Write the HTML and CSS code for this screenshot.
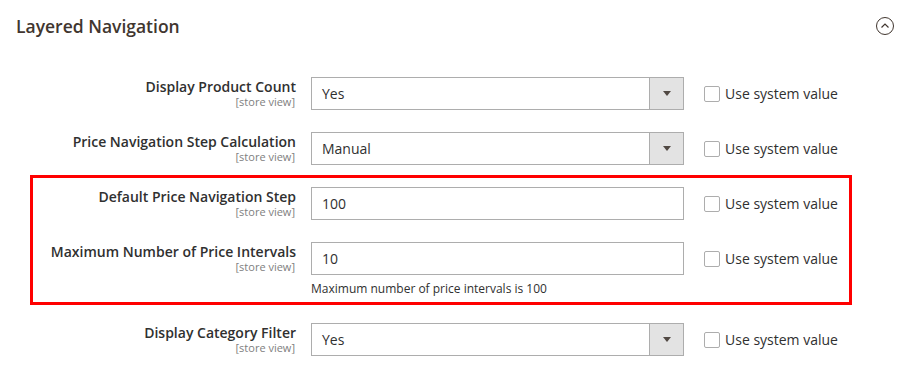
FILE: index.html
```html
<!DOCTYPE html>
<html>
<head>
<meta charset="utf-8">
<link rel="stylesheet" href="styles.css">
</head>
<body>
<div class="section">
  <div class="section-head">
    <h2 class="section-title">Layered Navigation</h2>
    <span class="toggle">
      <svg width="20" height="20" viewBox="0 0 20 20"><circle cx="10" cy="10" r="8.5" fill="none" stroke="#41362f" stroke-width="1"/><path d="M6.5 11.5 L10 8 L13.5 11.5" fill="none" stroke="#41362f" stroke-width="1.2"/></svg>
    </span>
  </div>
  <div class="fields">
    <div class="row">
      <div class="label"><span class="label-text">Display Product Count</span><span class="scope">[store view]</span></div>
      <div class="control"><div class="select"><span class="select-value">Yes</span><span class="select-arrow"><span class="tri"></span></span></div></div>
      <label class="use-default"><span class="checkbox"></span>Use system value</label>
    </div>
    <div class="row">
      <div class="label"><span class="label-text">Price Navigation Step Calculation</span><span class="scope">[store view]</span></div>
      <div class="control"><div class="select"><span class="select-value">Manual</span><span class="select-arrow"><span class="tri"></span></span></div></div>
      <label class="use-default"><span class="checkbox"></span>Use system value</label>
    </div>
    <div class="group">
      <div class="row">
        <div class="label"><span class="label-text">Default Price Navigation Step</span><span class="scope">[store view]</span></div>
        <div class="control"><div class="input">100</div></div>
        <label class="use-default"><span class="checkbox"></span>Use system value</label>
      </div>
      <div class="row row-note">
        <div class="label"><span class="label-text">Maximum Number of Price Intervals</span><span class="scope">[store view]</span></div>
        <div class="control"><div class="input">10</div><div class="note">Maximum number of price intervals is 100</div></div>
        <label class="use-default"><span class="checkbox"></span>Use system value</label>
      </div>
    </div>
    <div class="row">
      <div class="label"><span class="label-text">Display Category Filter</span><span class="scope">[store view]</span></div>
      <div class="control"><div class="select"><span class="select-value">Yes</span><span class="select-arrow"><span class="tri"></span></span></div></div>
      <label class="use-default"><span class="checkbox"></span>Use system value</label>
    </div>
  </div>
</div>
</body>
</html>
```
FILE: styles.css
```css
html, body {
  margin: 0;
  padding: 0;
  background: #ffffff;
}
body {
  font-family: "Open Sans", "Liberation Sans", sans-serif;
  color: #303030;
  font-size: 14px;
  width: 916px;
  height: 376px;
  overflow: hidden;
}
.section-head {
  display: flex;
  align-items: center;
  justify-content: space-between;
  padding: 10px 21px 0 16px;
  height: 32px;
}
.section-title {
  margin: 0;
  font-size: 17.5px;
  font-weight: 600;
  color: #41362f;
  line-height: 26px;
}
.toggle {
  display: flex;
  width: 20px;
  height: 20px;
  margin-top: 0;
}
.fields {
  padding-top: 35px;
  display: flex;
  flex-direction: column;
}
.row {
  display: grid;
  grid-template-columns: 296px 373px auto;
  column-gap: 15px;
  margin-bottom: 22px;
}
.group {
  position: relative;
}
.group::after {
  content: "";
  position: absolute;
  left: 30px;
  top: -12px;
  width: 816px;
  height: 124px;
  border: 3px solid #ff0000;
  pointer-events: none;
}
.row-note {
  margin-bottom: 26px;
}
.label {
  display: flex;
  flex-direction: column;
  align-items: flex-end;
  text-align: right;
  padding-top: 1px;
}
.label-text {
  font-weight: 600;
  font-size: 14px;
  line-height: 17px;
  color: #303030;
}
.scope {
  font-size: 11px;
  line-height: 13px;
  color: #808080;
  padding-right: 1px;
}
.control {
  display: flex;
  flex-direction: column;
}
.select, .input {
  box-sizing: border-box;
  height: 33px;
  border: 1px solid #adadad;
  background: #fff;
  display: flex;
  align-items: center;
  font-size: 14px;
  color: #303030;
}
.input {
  padding-left: 10px;
}
.select-value {
  flex: 1;
  padding-left: 10px;
}
.select-arrow {
  width: 33px;
  height: 100%;
  background: #e3e3e3;
  border-left: 1px solid #adadad;
  display: flex;
  align-items: center;
  justify-content: center;
}
.tri {
  width: 0;
  height: 0;
  border-left: 4px solid transparent;
  border-right: 4px solid transparent;
  border-top: 5px solid #514943;
}
.note {
  font-size: 12px;
  line-height: 16px;
  margin-top: 6px;
  color: #303030;
}
.use-default {
  display: flex;
  align-items: center;
  height: 33px;
  margin-left: 5px;
  font-size: 14px;
  color: #303030;
}
.checkbox {
  box-sizing: border-box;
  width: 16px;
  height: 16px;
  border: 1px solid #adadad;
  border-radius: 2px;
  background: #fff;
  margin-right: 5px;
}
```
